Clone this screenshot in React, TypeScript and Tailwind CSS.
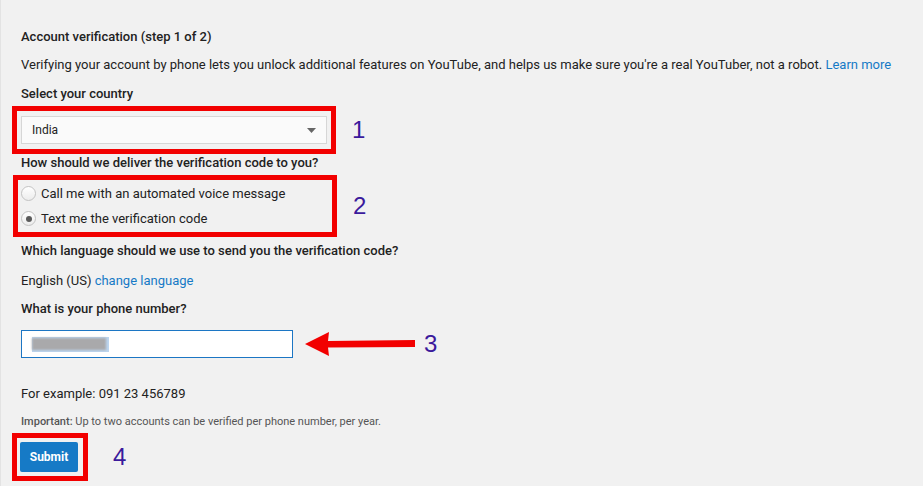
import React from "react";

function Num({ children, className = "" }: { children: React.ReactNode; className?: string }) {
  return (
    <span className={`font-['Liberation_Sans',sans-serif] text-[24px] leading-none text-[#3b1a9c] ${className}`}>
      {children}
    </span>
  );
}

function Radio({ checked }: { checked?: boolean }) {
  return (
    <span className="w-[15px] h-[15px] rounded-full border border-[#c3c3c3] bg-gradient-to-b from-white to-[#ececec] flex items-center justify-center shrink-0">
      {checked && <span className="w-[6px] h-[6px] rounded-full bg-[#5a5a5a]" />}
    </span>
  );
}

export default function App() {
  return (
    <div className="w-[923px] h-[486px] overflow-hidden bg-[#f1f1f1] border-l border-[#e3e3e3] font-['Roboto',sans-serif] text-[13px] leading-[18px] text-[#222]">
      <div className="pl-[20px] pt-[28px] flex flex-col items-start">
        <div className="font-medium">Account verification (step 1 of 2)</div>
        <div className="mt-[10px] whitespace-nowrap">
          Verifying your account by phone lets you unlock additional features on YouTube, and helps us make sure you're a real YouTuber, not a robot.{" "}
          <span className="text-[#167ac6]">Learn more</span>
        </div>
        <div className="mt-[11px] font-medium">Select your country</div>

        <div className="mt-[3px] flex items-center">
          <div className="-ml-[9px] border-[5px] border-[#f20000] px-[4px] py-[5px]">
            <div className="w-[306px] h-[28px] bg-[#fafafa] border border-[#d6d6d6] flex items-center justify-between pl-[10px] pr-[10px]">
              <span className="text-[12px]">India</span>
              <svg width="9" height="5" viewBox="0 0 9 5">
                <path d="M0 0 L9 0 L4.5 5 Z" fill="#666" />
              </svg>
            </div>
          </div>
          <Num className="ml-[16px]">1</Num>
        </div>

        <div className="mt-[0px] font-medium">How should we deliver the verification code to you?</div>

        <div className="mt-[3px] flex items-center">
          <div className="-ml-[8px] border-[5px] border-[#f20000] pl-[3px] py-[1px] w-[324px]">
            <div className="h-[25px] flex items-center gap-[5px]">
              <Radio />
              <span>Call me with an automated voice message</span>
            </div>
            <div className="h-[25px] flex items-center gap-[5px]">
              <Radio checked />
              <span>Text me the verification code</span>
            </div>
          </div>
          <Num className="ml-[16px]">2</Num>
        </div>

        <div className="mt-[5px] font-medium">Which language should we use to send you the verification code?</div>
        <div className="mt-[12px]">
          English (US) <span className="text-[#167ac6]">change language</span>
        </div>
        <div className="mt-[10px] font-medium">What is your phone number?</div>

        <div className="mt-[12px] flex items-center">
          <div className="w-[272px] h-[28px] bg-white border border-[#1c76c4] flex items-center pl-[10px]">
            <div className="w-[77px] h-[15px] bg-[#bcd5ef] flex items-center">
              <div className="w-[74px] h-[12px] bg-[#a9a9ab] blur-[1px]" />
            </div>
          </div>
          <svg className="ml-[12px]" width="110" height="26" viewBox="0 0 110 26">
            <path d="M0 13 L24 1 L23 10 L110 9 L110 16 L23 16.5 L24 25 Z" fill="#f20000" />
          </svg>
          <Num className="ml-[9px]">3</Num>
        </div>

        <div className="mt-[27px]">For example: 091 23 456789</div>
        <div className="mt-[11px] text-[11px] leading-[16px] text-[#555]">
          <span className="font-medium">Important:</span> Up to two accounts can be verified per phone number, per year.
        </div>

        <div className="mt-[3px] flex items-center">
          <div className="-ml-[9px] border-[5px] border-[#f20000] pl-[3px] pr-[5px] py-[4px]">
            <div className="w-[58px] h-[30px] rounded-[2px] bg-[#167ac6] flex items-center justify-center text-white text-[12px] font-bold">
              Submit
            </div>
          </div>
          <Num className="ml-[25px]">4</Num>
        </div>
      </div>
    </div>
  );
}
